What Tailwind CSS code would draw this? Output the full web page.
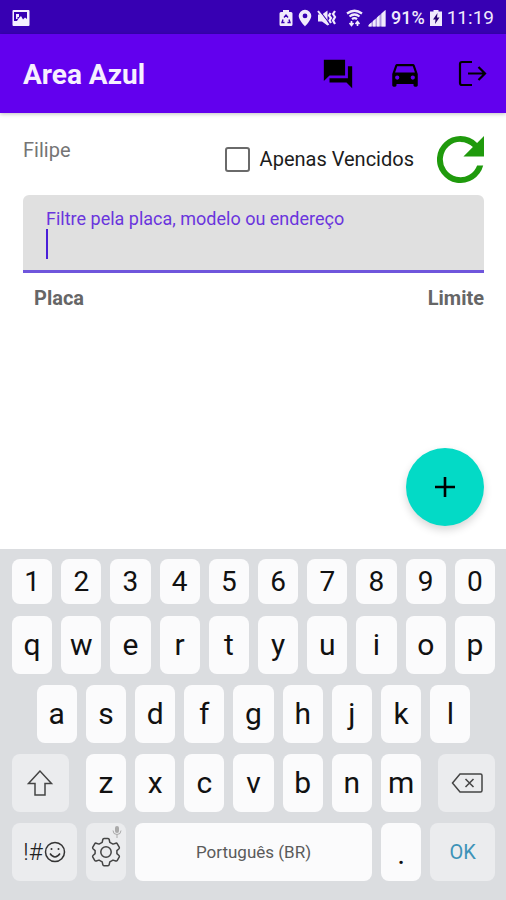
<!DOCTYPE html>
<html lang="pt-BR">
<head>
<meta charset="utf-8">
<meta name="viewport" content="width=device-width, initial-scale=1">
<title>Area Azul</title>
<script src="https://cdn.jsdelivr.net/npm/@tailwindcss/browser@4"></script>
</head>
<body class="flex min-h-screen flex-col bg-white font-[Roboto,sans-serif] text-black">

<!-- Status bar -->
<div class="flex h-[34px] items-center justify-between bg-[#3700b3] pt-0.5 pr-3 pl-3 text-[#f0eafc]">
  <svg class="h-[18px] w-[18px]" viewBox="0 0 18 18" aria-hidden="true">
    <rect x="0.5" y="1" width="17" height="16" rx="1" fill="#f4f0ff"/>
    <path d="M2 3h13v7l-2-1.500-2 2-2-3.500-2.500 2.500L5 12H2z" fill="#3700b3"/>
    <path d="M4 5h3v3H5.500v2H4z" fill="#f4f0ff"/>
  </svg>
  <div class="flex items-center gap-[5px]">
    <svg class="h-[18px] w-[14px]" viewBox="0 0 14 18" aria-hidden="true">
      <path d="M4 1h6v2h2q1.500 0 1.500 1.500v11q0 1.500-1.500 1.500H2Q.5 17 .5 15.500v-11Q.5 3 2 3h2z" fill="#f0eafc"/>
      <path d="M5 8.500 7 6l2 2.500M10 10.500l1 3H8.500M5.500 13.500H3l1-3" fill="none" stroke="#3700b3" stroke-width="1.400"/>
    </svg>
    <svg class="h-[18px] w-[14px]" viewBox="0 0 14 18" aria-hidden="true">
      <path d="M7 .8a6.300 6.300 0 0 0-6.300 6.300C.7 11 7 17.500 7 17.500S13.300 11 13.300 7.100A6.300 6.300 0 0 0 7 .8zm0 3.700a2.400 2.400 0 1 1 0 4.800 2.400 2.400 0 0 1 0-4.800z" fill="#f0eafc"/>
    </svg>
    <svg class="h-[18px] w-[20px]" viewBox="0 0 20 18" aria-hidden="true">
      <path d="M1 5.500h4l5.500-4v15l-5.500-4H1z" fill="#f0eafc"/>
      <path d="M2.500 1.500 12 14" stroke="#3700b3" stroke-width="1.200"/>
      <path d="M1 2 11.500 16" stroke="#f0eafc" stroke-width="2"/>
      <path d="m13.500 4-1.500 2.500L14 9l-1.500 2.500L14 14M18 2l-2 3 2 3-2 3.500 2 3.500" fill="none" stroke="#f0eafc" stroke-width="2.200"/>
    </svg>
    <svg class="ml-1 h-[18px] w-[17px]" viewBox="0 0 17 18" aria-hidden="true">
      <path d="M1 4.500q7.500-5.500 15 0M3.500 7.500q5-4 10 0M6 10.200q2.500-2 5 0" fill="none" stroke="#f0eafc" stroke-width="2.200"/>
      <path d="M5.500 12v4M3.500 14l2 2.500 2-2.500M11.500 17v-4M9.500 15l2-2.500 2 2.500" fill="none" stroke="#f0eafc" stroke-width="1.600"/>
    </svg>
    <svg class="h-[18px] w-[18px]" viewBox="0 0 18 18" aria-hidden="true">
      <path d="M0 17.500v-1L17.500 1v16.500z" fill="#f0eafc" opacity=".65"/>
      <path d="M1 17.500v-2l2.500-2v4zM5 17.500V12l2.500-2v7.500zM9 17.500V8.500L11.500 6v11.500zM13.500 17.500v-13l4-3.500v16.500z" fill="#f0eafc"/>
    </svg>
    <span class="text-[18px] leading-6 font-medium">91%</span>
    <svg class="h-[18px] w-[12px]" viewBox="0 0 12 18" aria-hidden="true">
      <path d="M3.500 1h5v1.500H12V17H0V2.500h3.500z" fill="#f0eafc"/>
      <path d="M7.500 4 3 10.500h2.500L5 15l4.500-6.500H7z" fill="#26006f"/>
    </svg>
    <span class="text-[19px] leading-6">11:19</span>
  </div>
</div>

<!-- App bar -->
<header class="z-10 flex h-[79px] items-center justify-between bg-[#6200ee] pr-[17px] pl-[23px] shadow-[0_1px_4px_rgba(0,0,0,0.25)]">
  <h1 class="pt-0.5 text-[28px] leading-8 font-bold text-[#f6efff]">Area Azul</h1>
  <nav class="flex gap-[33px]">
    <button type="button" aria-label="Mensagens">
      <svg class="h-[34px] w-[34px]" viewBox="0 0 24 24"><path d="M22 6.500h-3V15H6v3h12l4 4zM17 13V2H2v15l4-4z"/></svg>
    </button>
    <button type="button" aria-label="Veículos">
      <svg class="h-[34px] w-[34px]" viewBox="0 0 24 24"><path d="M18.920 6.010C18.720 5.420 18.160 5 17.500 5h-11c-.66 0-1.210.42-1.420 1.010L3 12v8c0 .55.45 1 1 1h1c.55 0 1-.45 1-1v-1h12v1c0 .55.45 1 1 1h1c.55 0 1-.45 1-1v-8zM6.500 16a1.500 1.500 0 1 1 0-3 1.500 1.500 0 0 1 0 3zm11 0a1.500 1.500 0 1 1 0-3 1.500 1.500 0 0 1 0 3zM5 11l1.500-4.500h11L19 11z"/></svg>
    </button>
    <button type="button" aria-label="Sair">
      <svg class="h-[34px] w-[34px]" viewBox="0 0 34 34" fill="none" stroke="#000" stroke-width="2.200"><path d="M17 5H7Q5 5 5 7v19q0 2 2 2h10M13 16.500h17M23.500 10l6.500 6.500-6.500 6.500"/></svg>
    </button>
  </nav>
</header>

<!-- Content -->
<main class="relative flex-1 pt-[22px] pr-[22px] pb-4 pl-[23px]">
  <div class="flex h-12 items-center">
    <span class="self-start pt-[3px] text-[20px] leading-6 text-[#757575]">Filipe</span>
    <label class="ml-auto flex items-center gap-2.5 text-[20px] leading-6 text-[#1c1c1c]">
      <input type="checkbox" class="h-[25px] w-[25px] appearance-none rounded-[3px] border-[2px] border-[#6a6a6a] bg-white checked:bg-[#6200ee]">
      Apenas Vencidos
    </label>
    <button type="button" aria-label="Atualizar" class="ml-[23px]">
      <svg class="h-[47px] w-[47px]" viewBox="4 4 16 16"><path fill="#1f9a0c" d="M17.650 6.350A7.960 7.960 0 0 0 12 4a8 8 0 1 0 7.730 10h-2.080A6 6 0 1 1 12 6c1.660 0 3.140.69 4.220 1.780L13 11h7V4z"/></svg>
    </button>
  </div>

  <div class="relative mt-3 flex flex-col rounded-t-md border-b-[3px] border-[#6f56dc] bg-[#e0e0e0] px-[23px] pt-3 pb-[9px]">
    <label for="filtro" class="text-[18px] leading-6 text-[#6a35dd]">Filtre pela placa, modelo ou endereço</label>
    <input id="filtro" type="text" class="h-[30px] w-full bg-transparent text-[22px] caret-transparent outline-none">
    <span class="absolute bottom-[11px] left-[23px] h-[30px] w-[2px] bg-[#4a1fd8]" aria-hidden="true"></span>
  </div>

  <table class="mt-[11px] w-full text-[20px] leading-7 text-[#666]">
    <thead>
      <tr>
        <th scope="col" class="pl-[11px] text-left font-bold">Placa</th>
        <th scope="col" class="text-right font-bold">Limite</th>
      </tr>
    </thead>
    <tbody></tbody>
  </table>

  <button type="button" aria-label="Adicionar" class="absolute right-[22px] bottom-[23px] flex h-[78px] w-[78px] items-center justify-center rounded-full bg-[#03dac6] shadow-[0_4px_8px_rgba(0,0,0,0.16)]">
    <svg class="h-5 w-5" viewBox="0 0 20 20" stroke="#000" stroke-width="2.600"><path d="M10 0v20M0 10h20"/></svg>
  </button>
</main>

<!-- Keyboard -->
<section aria-label="Teclado" class="flex flex-col gap-[11px] bg-[#dbdde0] px-[11px] pt-2.5 pb-[19px] pl-3 text-[30px] leading-8 text-[#111]">
  <div class="mb-px grid h-[45px] grid-cols-10 gap-[9px] text-[28px]">
    <button type="button" class="rounded-lg bg-[#fbfbfc]">1</button>
    <button type="button" class="rounded-lg bg-[#fbfbfc]">2</button>
    <button type="button" class="rounded-lg bg-[#fbfbfc]">3</button>
    <button type="button" class="rounded-lg bg-[#fbfbfc]">4</button>
    <button type="button" class="rounded-lg bg-[#fbfbfc]">5</button>
    <button type="button" class="rounded-lg bg-[#fbfbfc]">6</button>
    <button type="button" class="rounded-lg bg-[#fbfbfc]">7</button>
    <button type="button" class="rounded-lg bg-[#fbfbfc]">8</button>
    <button type="button" class="rounded-lg bg-[#fbfbfc]">9</button>
    <button type="button" class="rounded-lg bg-[#fbfbfc]">0</button>
  </div>
  <div class="grid h-[58px] grid-cols-10 gap-[9px]">
    <button type="button" class="rounded-lg bg-[#fbfbfc]">q</button>
    <button type="button" class="rounded-lg bg-[#fbfbfc]">w</button>
    <button type="button" class="rounded-lg bg-[#fbfbfc]">e</button>
    <button type="button" class="rounded-lg bg-[#fbfbfc]">r</button>
    <button type="button" class="rounded-lg bg-[#fbfbfc]">t</button>
    <button type="button" class="rounded-lg bg-[#fbfbfc]">y</button>
    <button type="button" class="rounded-lg bg-[#fbfbfc]">u</button>
    <button type="button" class="rounded-lg bg-[#fbfbfc]">i</button>
    <button type="button" class="rounded-lg bg-[#fbfbfc]">o</button>
    <button type="button" class="rounded-lg bg-[#fbfbfc]">p</button>
  </div>
  <div class="grid h-[58px] grid-cols-20 gap-[9px]">
    <button type="button" class="col-span-2 col-start-2 rounded-lg bg-[#fbfbfc]">a</button>
    <button type="button" class="col-span-2 rounded-lg bg-[#fbfbfc]">s</button>
    <button type="button" class="col-span-2 rounded-lg bg-[#fbfbfc]">d</button>
    <button type="button" class="col-span-2 rounded-lg bg-[#fbfbfc]">f</button>
    <button type="button" class="col-span-2 rounded-lg bg-[#fbfbfc]">g</button>
    <button type="button" class="col-span-2 rounded-lg bg-[#fbfbfc]">h</button>
    <button type="button" class="col-span-2 rounded-lg bg-[#fbfbfc]">j</button>
    <button type="button" class="col-span-2 rounded-lg bg-[#fbfbfc]">k</button>
    <button type="button" class="col-span-2 rounded-lg bg-[#fbfbfc]">l</button>
  </div>
  <div class="grid h-[58px] grid-cols-20 gap-[9px]">
    <button type="button" aria-label="Maiúsculas" class="col-span-3 mr-2 flex items-center justify-center rounded-lg bg-[#ebecee]">
      <svg class="h-7 w-7" viewBox="0 0 28 28" fill="none" stroke="#444" stroke-width="1.500"><path d="M14 2 2.500 14.500H9V26h10V14.500h6.500z"/></svg>
    </button>
    <button type="button" class="col-span-2 rounded-lg bg-[#fbfbfc]">z</button>
    <button type="button" class="col-span-2 rounded-lg bg-[#fbfbfc]">x</button>
    <button type="button" class="col-span-2 rounded-lg bg-[#fbfbfc]">c</button>
    <button type="button" class="col-span-2 rounded-lg bg-[#fbfbfc]">v</button>
    <button type="button" class="col-span-2 rounded-lg bg-[#fbfbfc]">b</button>
    <button type="button" class="col-span-2 rounded-lg bg-[#fbfbfc]">n</button>
    <button type="button" class="col-span-2 rounded-lg bg-[#fbfbfc]">m</button>
    <button type="button" aria-label="Apagar" class="col-span-3 ml-2 flex items-center justify-center rounded-lg bg-[#ebecee]">
      <svg class="h-5 w-8" viewBox="0 0 32 20" fill="none" stroke="#444" stroke-width="1.500"><path d="M9 1h20.500q1.500 0 1.500 1.500v15q0 1.500-1.500 1.500H9l-7.500-9zM14.500 6l8 8M22.500 6l-8 8"/></svg>
    </button>
  </div>
  <div class="grid h-[58px] grid-cols-20 gap-[9px]">
    <button type="button" aria-label="Símbolos e emojis" class="col-span-3 flex items-center justify-center gap-px rounded-lg bg-[#ebecee] text-[24px] font-light text-[#222]">
      <span>!#</span>
      <svg class="h-[22px] w-[22px]" viewBox="0 0 22 22" fill="none" stroke="#333" stroke-width="1.500"><circle cx="11" cy="11" r="9.500"/><path d="M6 12.500q5 7 10 0"/><circle cx="7.500" cy="8" r="1" fill="#333" stroke="none"/><circle cx="14.500" cy="8" r="1" fill="#333" stroke="none"/></svg>
    </button>
    <button type="button" aria-label="Configurações" class="relative col-span-2 flex items-center justify-center rounded-lg bg-[#ebecee]">
      <svg class="h-[30px] w-[30px]" viewBox="0 0 30 30" fill="none" stroke="#444" stroke-width="1.500" stroke-linejoin="round"><path d="M13 1.500h4q1 0 1.200 1l.6 2.800 3.200 1.800 2.800-.9q1-.3 1.500.6l1.900 3.300q.5.900-.2 1.600l-2.100 1.900v3l2.100 1.900q.7.700.2 1.600l-1.900 3.300q-.5.900-1.500.6l-2.800-.9-3.200 1.800-.6 2.800q-.2 1-1.200 1h-4q-1 0-1.200-1l-.6-2.800L8 23.100l-2.800.9q-1 .3-1.500-.6l-1.900-3.300q-.5-.9.200-1.600l2.100-1.900v-3L2 11.700q-.7-.7-.2-1.600l1.900-3.300q.5-.9 1.500-.6l2.800.9 3.200-1.800.6-2.800q.2-1 1.200-1z"/><circle cx="15" cy="15" r="5.200"/></svg>
      <svg class="absolute top-[3px] right-1 h-3 w-2.5" viewBox="0 0 10 12" fill="none" stroke="#aaa"><rect x="3" y="0" width="4" height="7" rx="2" fill="#aaa" stroke="none"/><path d="M1 4.500q0 4 4 4t4-4M5 8.500V12"/></svg>
    </button>
    <button type="button" class="col-span-10 rounded-lg bg-[#fbfbfc] text-[17px] text-[#5a5a5a]">Português (BR)</button>
    <button type="button" class="col-span-2 rounded-lg bg-[#fbfbfc] pt-1">.</button>
    <button type="button" class="col-span-3 rounded-lg bg-[#ebecee] text-[20px] text-[#3d93b8]">OK</button>
  </div>
</section>

</body>
</html>
